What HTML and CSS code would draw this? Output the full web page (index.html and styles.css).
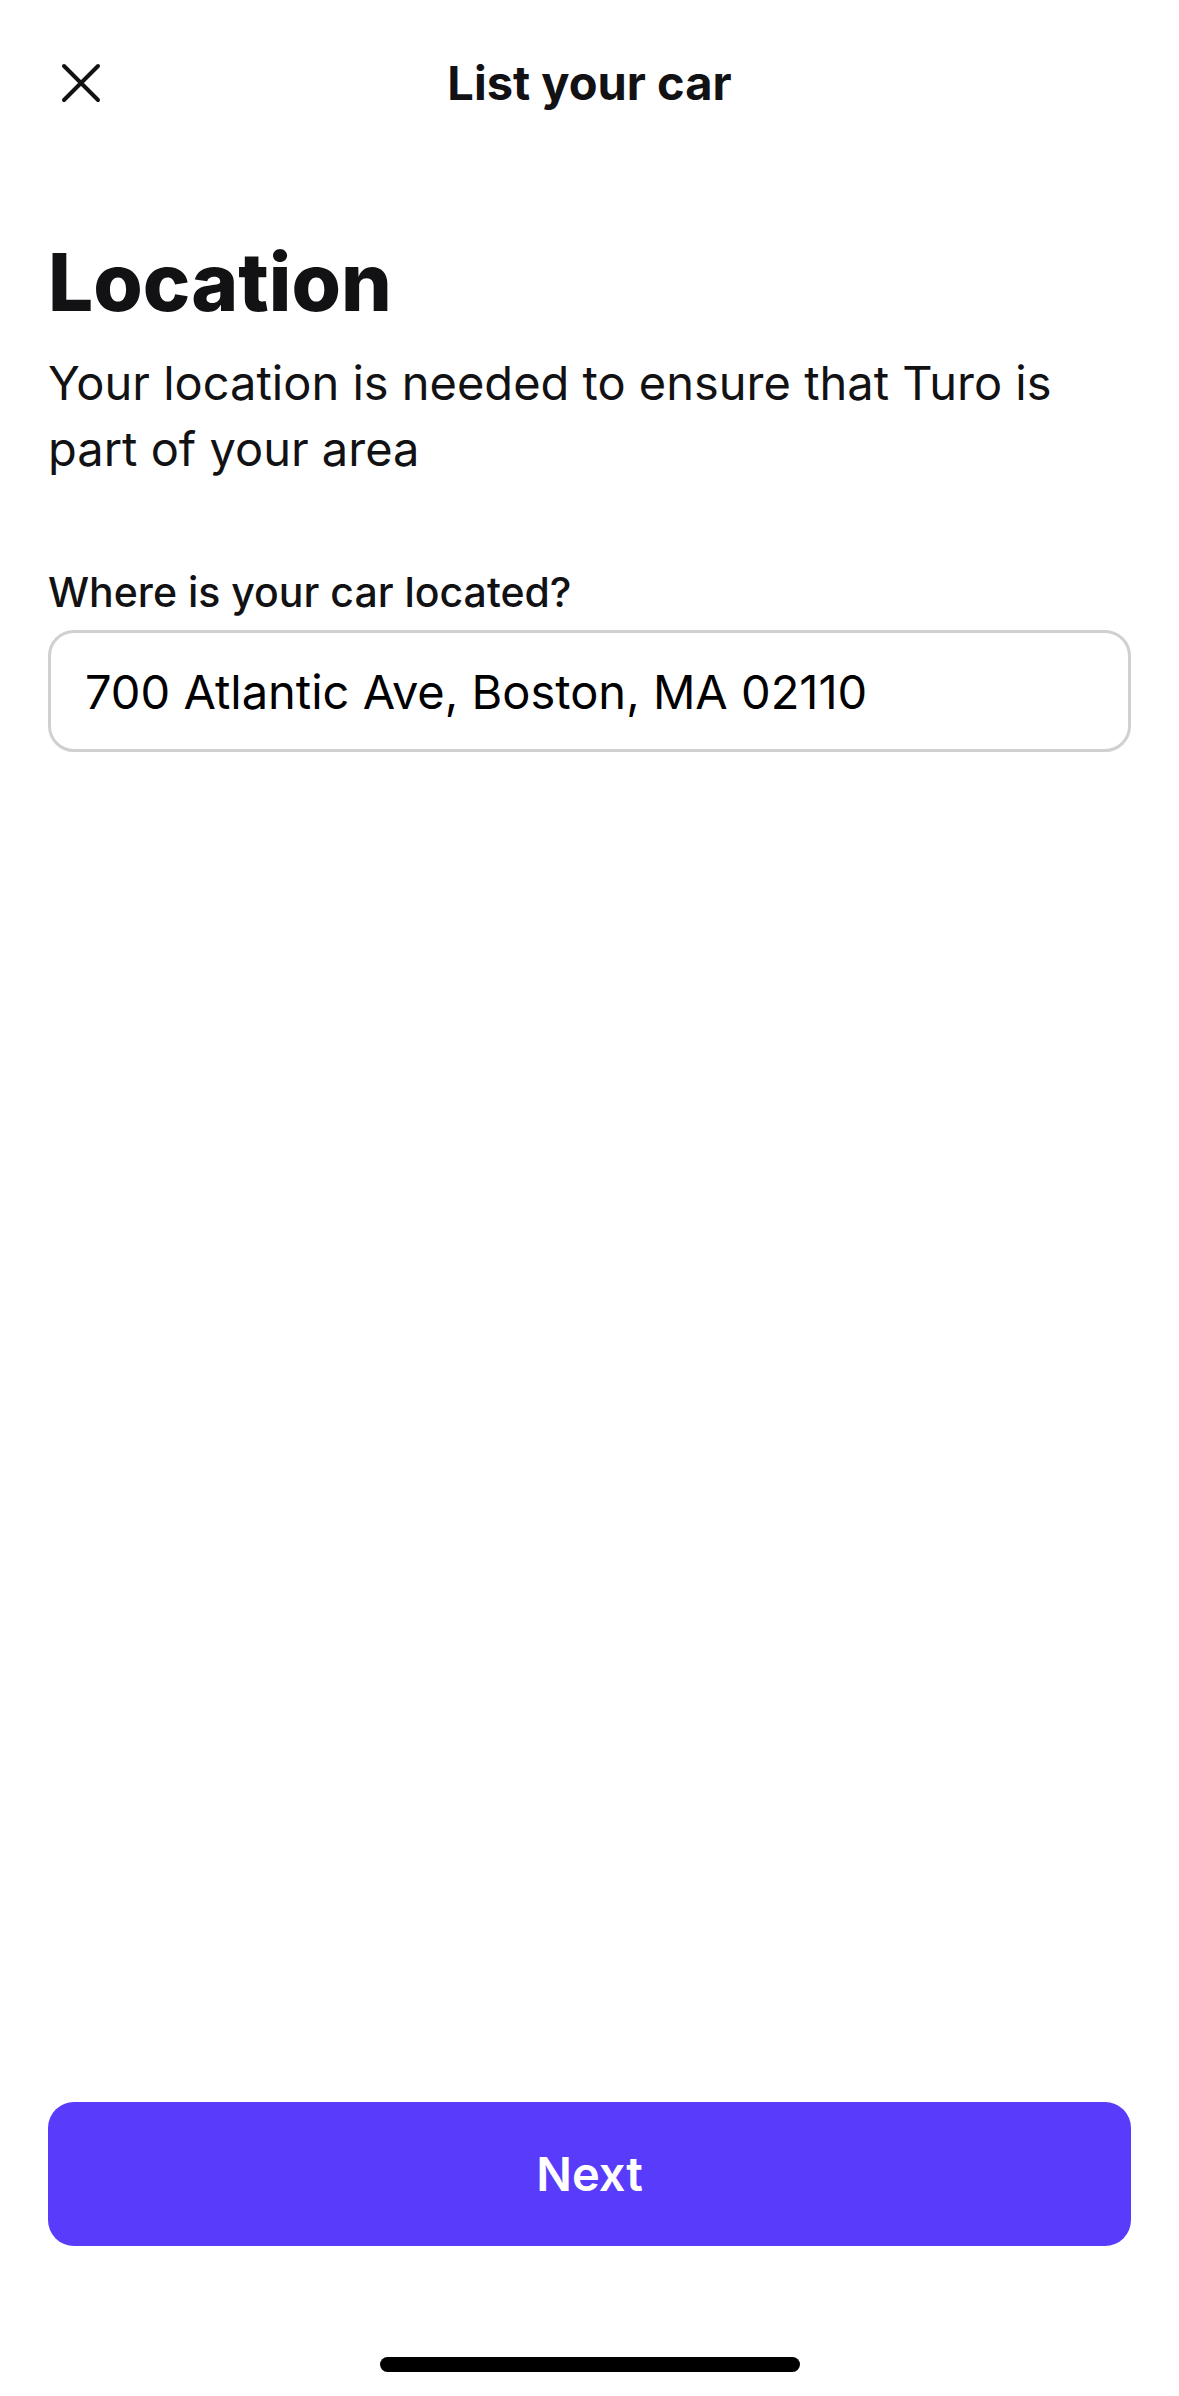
FILE: index.html
```html
<!DOCTYPE html>
<html lang="en">
<head>
    <meta charset="UTF-8">
    <meta name="viewport" content="width=device-width, initial-scale=1.0">
    <title>List your car</title>
    <link rel="stylesheet" href="styles.css">
</head>
<body>
    <header class="header">
        <button class="close" type="button" aria-label="Close">
            <svg width="40" height="40" viewBox="0 0 40 40" fill="none" stroke="currentColor" stroke-width="4" stroke-linecap="round">
                <path d="M3 3L37 37M37 3L3 37"/>
            </svg>
        </button>
        <h1 class="header-title">List your car</h1>
    </header>

    <form class="content">
        <h2>Location</h2>
        <p class="intro">Your location is needed to ensure that Turo is part of your area</p>
        <div class="form-group">
            <label for="car-location">Where is your car located?</label>
            <input type="text" id="car-location" value="700 Atlantic Ave, Boston, MA 02110">
        </div>
        <button class="next" type="submit">Next</button>
    </form>

    <div class="home-bar"></div>
</body>
</html>
```
FILE: styles.css
```css
* {
    box-sizing: border-box;
}
body {
    display: flex;
    flex-direction: column;
    min-height: 100vh;
    margin: 0;
    font-family: Inter, "Liberation Sans", sans-serif;
    font-size: 47px;
    line-height: 66px;
    color: #121214;
    background: #fff;
}
button, input {
    font: inherit;
}
.header {
    display: grid;
    grid-template-columns: 66px 1fr 66px;
    align-items: center;
    padding: 50px 48px;
}
.close {
    display: flex;
    align-items: center;
    justify-content: center;
    height: 66px;
    padding: 0;
    border: none;
    background: none;
    color: inherit;
    cursor: pointer;
}
.header-title {
    margin: 0;
    font-size: 47px;
    font-weight: 700;
    text-align: center;
}
.content {
    display: flex;
    flex-direction: column;
    flex: 1;
    padding: 68px 48px 0;
}
h2 {
    margin: 0;
    font-size: 80px;
    line-height: 96px;
    font-weight: 800;
}
.intro {
    margin: 20px 0 0;
}
.form-group {
    margin-top: 82px;
}
.form-group label {
    display: block;
    margin-bottom: 10px;
    font-size: 41px;
    line-height: 56px;
    font-weight: 500;
}
.form-group input {
    display: block;
    width: 100%;
    height: 122px;
    padding: 0 34px;
    border: 3px solid #d0d0d0;
    border-radius: 26px;
    color: #000;
    background: #fff;
}
.next {
    height: 144px;
    margin-top: auto;
    border: none;
    border-radius: 26px;
    background: #593cfb;
    color: #fff;
    font-weight: 600;
    cursor: pointer;
}
.home-bar {
    width: 420px;
    height: 15px;
    margin: 111px auto 24px;
    border-radius: 8px;
    background: #000;
}
```
